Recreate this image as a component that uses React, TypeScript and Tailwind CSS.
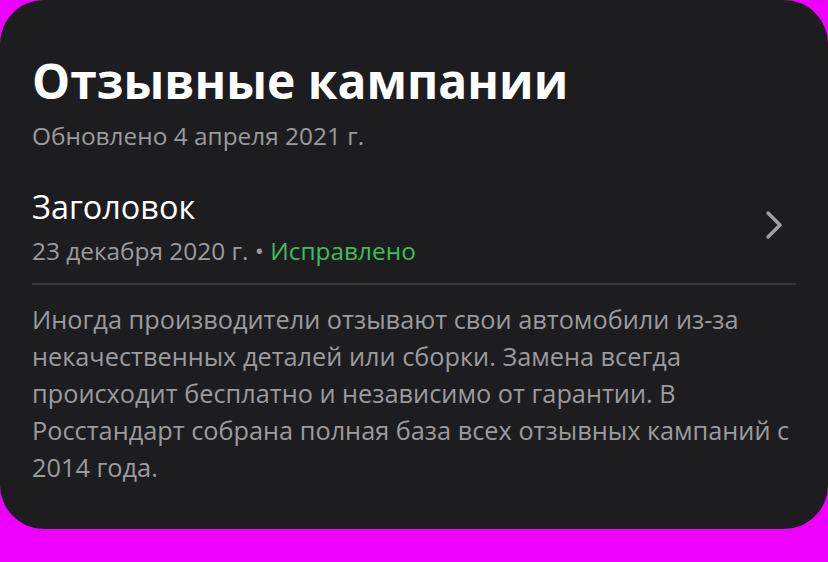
import React from 'react';

const FONT = { fontFamily: '"Open Sans", "Noto Sans", sans-serif' };

export default function App() {
  return (
    <div className="w-[828px] h-[562px] bg-[#ee00ff]" style={FONT}>
      <div className="h-[529px] rounded-[44px] bg-[#1d1d1f] px-8 pt-[52px]">
        <h1 className="text-[48px] leading-[58px] font-bold text-white">Отзывные кампании</h1>
        <p className="mt-[10px] text-[24.4px] leading-[32px] text-[#9b9b9e]">Обновлено 4 апреля 2021 г.</p>

        <div className="mt-[32px] flex items-center justify-between pb-[16px] border-b-2 border-[#38383a]">
          <div>
            <div className="text-[32.4px] leading-[44px] text-white">Заголовок</div>
            <div className="mt-[7px] text-[24.4px] leading-[32px] text-[#9b9b9e]">
              23 декабря 2020 г. • <span className="text-[#3dbd5c]">Исправлено</span>
            </div>
          </div>
          <svg width="20" height="32" viewBox="0 0 20 32" className="mr-[12px] mb-[2px]" fill="none">
            <path d="M4 4l12 12L4 28" stroke="#a0a0a3" strokeWidth="3.5" strokeLinecap="round" strokeLinejoin="round" />
          </svg>
        </div>

        <p className="mt-[16px] text-[25.3px] leading-[37px] text-[#9b9b9e]">
          Иногда производители отзывают свои автомобили из-за некачественных деталей или сборки. Замена всегда происходит бесплатно и независимо от гарантии. В Росстандарт собрана полная база всех отзывных кампаний с 2014 года.
        </p>
      </div>
    </div>
  );
}
